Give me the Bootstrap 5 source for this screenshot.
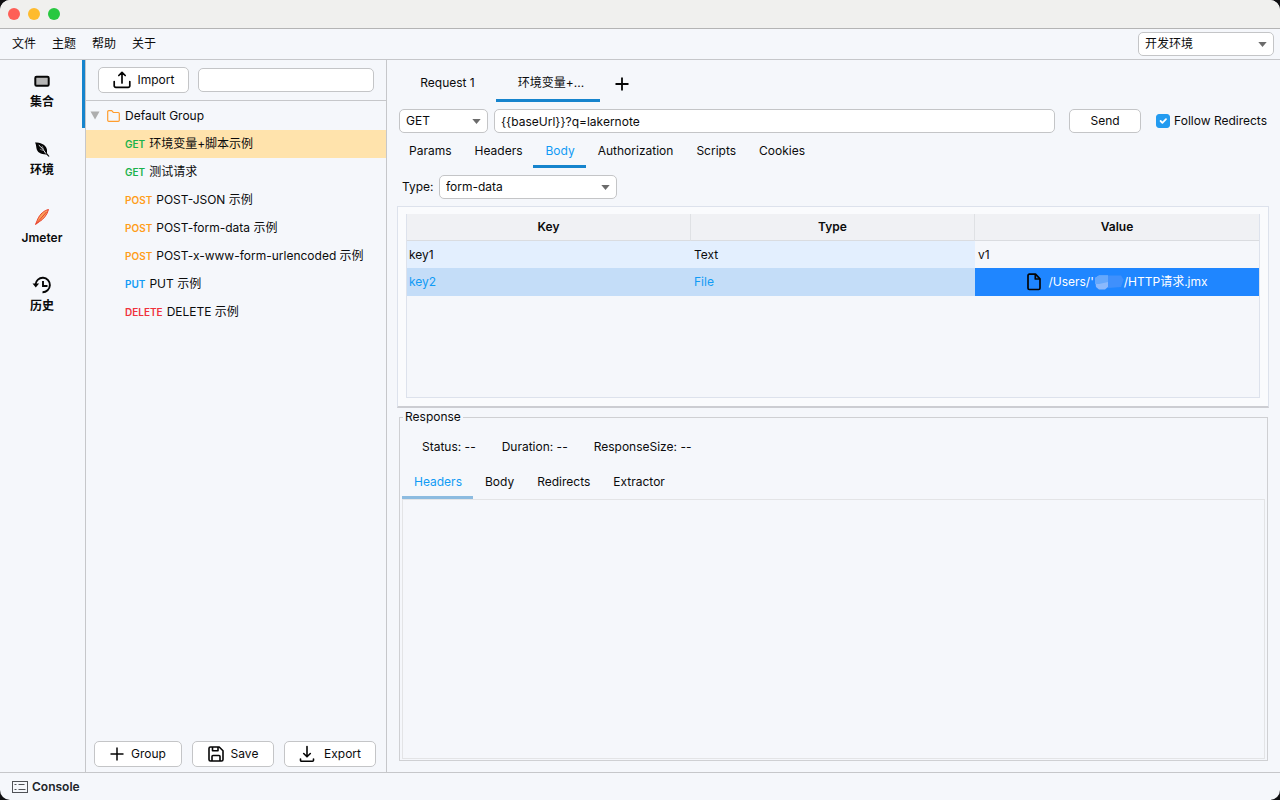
<!DOCTYPE html>
<html lang="zh-CN">
<head>
<meta charset="utf-8">
<meta name="viewport" content="width=device-width, initial-scale=1">
<title>HTTP Client</title>
<link href="https://cdn.jsdelivr.net/npm/bootstrap@5.3.0/dist/css/bootstrap.min.css" rel="stylesheet">
<style>
:root{--bg:#f5f7fb;--line:#c6c7ca;--accent:#1684cd;--link:#119bf5}
html{background:#101012}
body{font-family:Inter,"Noto Sans CJK SC",sans-serif;font-size:12px;line-height:16px;color:#0b0b0c;background:#101012}
.app-window{background:var(--bg);border-radius:10px;overflow:hidden}
.title-strip{height:29px;background:#f0f0ee;border-bottom:1px solid #b4b4b4;padding-left:8px}
.dot{width:12px;height:12px;border-radius:50%}
.menu-strip{height:31px;border-bottom:1px solid var(--line);padding:0 6px 0 12px}
.menu-strip a,.side-tabs button{color:inherit;text-decoration:none}
.form-select,.form-control,.tool-btn{font-size:12px;line-height:16px;min-height:24px;height:24px;border:1px solid #c4c5c7;border-radius:5px;background-color:#fff;color:#0b0b0c}
.form-select{padding:0 24px 0 6px;background-image:url("data:image/svg+xml,%3Csvg xmlns='http://www.w3.org/2000/svg' viewBox='0 0 10 6'%3E%3Cpath d='M0 0h10L5 6z' fill='%236b6b6b'/%3E%3C/svg%3E");background-size:9px 5px;background-position:right 6px center}
.form-control{padding:0 6px}
.tool-btn{display:inline-flex;align-items:center;justify-content:center;gap:7px;padding:0}
.tool-btn.tall{height:26px}
.side-tabs{width:86px;border-right:1px solid var(--line)}
.side-tabs button{height:68px;padding:0 0 7px 2px;border:0;border-right:3px solid transparent;background:none;font-weight:600;display:flex;flex-direction:column;align-items:center;justify-content:center;gap:4px}
.side-tabs button.active{border-right-color:var(--accent)}
.tree-pane{width:301px;border-right:1px solid var(--line)}
.tree-tools{height:41px;border-bottom:1px solid var(--line);padding:0 12px;gap:9px}
.tree-list .node{height:28px;padding-left:39px;display:flex;align-items:center;gap:4px;color:inherit;text-decoration:none;white-space:nowrap}
.tree-list .node.root{padding-left:4px;height:29px}
.tree-list .node.active{background:#ffe3ac}
.verb{font-size:10px;line-height:12px;font-weight:600}
.get{color:#1bb24b}.post{color:#ff9d19}.put{color:#119bf5}.del{color:#f0323c}
.main-pane{padding:0 12px}
.req-tabs{height:42px}
.req-tabs button,.sub-tabs button{border:0;border-bottom:3px solid transparent;background:none;color:inherit;padding:3px 0 0}
.req-tabs button{padding-top:7px}
.req-tabs .req{width:97px}
.req-tabs .req.active{width:104px;padding-left:6px;border-bottom-color:var(--accent)}
.sub-tabs button{height:32px;padding:0 11px 0 12px}
.sub-tabs .active{color:var(--link);border-bottom-color:var(--accent)}
.sub-tabs .muted-line.active{border-bottom-color:#8cbbe0}
.full-left{margin-left:-2px}
.form-check-input{width:14px;height:14px;margin:0;border-radius:2px}
.form-check-input:checked{background-color:#239bf0;border-color:#239bf0}
.grid-box{margin:7px -1px 0 -2px;border:1px solid #dde2ec;border-bottom:2px solid #cccdd2;background:#fafbfd;padding:7px 8px 8px;height:202px}
.grid-view{border:1px solid #dde2ec;border-top:0;background:var(--bg)}
.grid-table{table-layout:fixed;width:100%;margin:0;border-collapse:separate;border-spacing:0}
.grid-table th{background:#f0f1f4;height:27px;text-align:center;font-weight:600;border-bottom:1px solid #dadce0;border-right:1px solid #dfe1e4;padding:0}
.grid-table th:last-child{border-right:0}
.grid-table td{height:28px;padding:0 2px;vertical-align:middle}
.grid-table .r1 td{height:27px}
.grid-table td+td{padding-left:3px}
.grid-table .r1 td{background:#e3effe}
.grid-table .r1 td:last-child{background:var(--bg)}
.grid-table .r2 td{background:#c4ddf8;color:var(--link)}
.grid-table .r2 td:last-child{background:#1f86ff;color:#fff}
.resp{border:1px solid #cfd0d3;padding:0 2px 1px;margin:1px 0 11px;min-height:0}
.resp legend{float:none;width:auto;font-size:12px;line-height:16px;margin:0 0 0 1px;padding:0 2px}
.stats{padding:14px 20px 0;gap:26px}
.result{border:1px solid #e3e4e6}
.console-strip{height:28px;border-top:1px solid var(--line);padding-left:12px}
.console-strip button{font-weight:600;gap:4px;font-size:12px;line-height:16px}
</style>
</head>
<body>
<div class="app-window vh-100 d-flex flex-column">
  <header>
    <div class="title-strip d-flex align-items-center gap-2">
      <span class="dot" style="background:#fe5f57"></span><span class="dot" style="background:#febb2e"></span><span class="dot" style="background:#28c840"></span>
    </div>
    <div class="menu-strip d-flex align-items-center">
      <nav class="d-flex gap-3"><a href="#">文件</a><a href="#">主题</a><a href="#">帮助</a><a href="#">关于</a></nav>
      <select class="form-select ms-auto" style="width:136px" aria-label="Environment"><option>开发环境</option></select>
    </div>
  </header>

  <div class="d-flex flex-grow-1" style="min-height:0">
    <nav class="side-tabs d-flex flex-column flex-shrink-0">
      <button class="active" type="button">
        <svg width="18" height="18" viewBox="0 0 18 18"><rect x="2.300" y="4.800" width="13.400" height="9" rx="1.200" fill="#b5b5b5" stroke="#050505" stroke-width="2"/></svg>集合</button>
      <button type="button">
        <svg width="18" height="18" viewBox="0 0 18 18"><path d="M2 2.500C7 2.500 12.500 4 13.800 9c.5 1.900 0 3.400.4 4.600l2.300 2.700-.9.500-2.200-2.400C8 14.500 4 12.500 3.400 8 3.100 5.800 3 4.300 2 2.500z" fill="#050505"/><path d="M5.800 5.200c2.600 1.900 5 5 7 8.300" stroke="#f5f7fb" stroke-width="1" fill="none"/><path d="M6.800 9l3 1.600M9 5.800l1.600 3.600" stroke="#f5f7fb" stroke-width=".5" fill="none"/></svg>环境</button>
      <button type="button">
        <svg width="18" height="18" viewBox="0 0 18 18"><path d="M15.500 1.500C11 2.500 7 6 4.800 11L2.500 16.500l3.700-2.700c4-2.300 8-6.800 9.300-12.300z" fill="#f9a05a" stroke="#e8422f" stroke-width="1"/><path d="M3 16L13.500 4" stroke="#e8422f" stroke-width="1"/></svg>Jmeter</button>
      <button type="button">
        <svg width="20" height="18" viewBox="0 0 20 18" fill="none" stroke="#050505" stroke-width="1.900"><path d="M3.500 8.500A7.200 7.200 0 1 1 10.500 16.200"/><path d="M11 5v5h4.500"/><path d="M.5 7.500h6.600L3.800 11.500z" fill="#050505" stroke="none"/></svg>历史</button>
    </nav>

    <aside class="tree-pane d-flex flex-column flex-shrink-0">
      <div class="tree-tools d-flex align-items-center">
        <button class="tool-btn tall flex-shrink-0" style="width:91px" type="button">
          <svg width="18" height="18" viewBox="0 0 18 18" fill="none" stroke="#050505" stroke-width="1.700" stroke-linecap="round" stroke-linejoin="round"><path d="M9 12V1.500M5.800 4.500L9 1.300l3.200 3.200M1.200 10.500v4.300a1.600 1.600 0 0 0 1.600 1.600h12.400a1.600 1.600 0 0 0 1.600-1.600v-4.300"/></svg>Import</button>
        <input class="form-control" type="text" aria-label="Search">
      </div>
      <div class="tree-list flex-grow-1">
        <a class="node root" href="#">
          <svg width="10" height="9" viewBox="0 0 10 9"><path d="M.5.500h9L5 8.500z" fill="#aeaeae"/></svg>
          <svg style="margin:0 1px 0 3px" width="13" height="12" viewBox="0 0 13 12"><path d="M.7 1.700a1 1 0 0 1 1-1h3l1.600 1.800h5a1 1 0 0 1 1 1v6.800a1 1 0 0 1-1 1H1.700a1 1 0 0 1-1-1z" fill="none" stroke="#ff9d2e" stroke-width="1.200"/></svg>Default Group</a>
        <a class="node active" href="#"><span class="verb get">GET</span>环境变量+脚本示例</a>
        <a class="node" href="#"><span class="verb get">GET</span>测试请求</a>
        <a class="node" href="#"><span class="verb post">POST</span>POST-JSON 示例</a>
        <a class="node" href="#"><span class="verb post">POST</span>POST-form-data 示例</a>
        <a class="node" href="#"><span class="verb post">POST</span>POST-x-www-form-urlencoded 示例</a>
        <a class="node" href="#"><span class="verb put">PUT</span>PUT 示例</a>
        <a class="node" href="#"><span class="verb del">DELETE</span>DELETE 示例</a>
      </div>
      <div class="d-flex px-2" style="gap:10px;padding-bottom:5px">
        <button class="tool-btn tall" style="width:88px" type="button">
          <svg width="14" height="14" viewBox="0 0 14 14"><path d="M7 .5v13M.5 7h13" stroke="#050505" stroke-width="1.500"/></svg>Group</button>
        <button class="tool-btn tall" style="width:82px" type="button">
          <svg width="16" height="16" viewBox="0 0 16 16" fill="none" stroke="#050505" stroke-width="1.600" stroke-linejoin="round"><path d="M1 2.500A1.500 1.500 0 0 1 2.500 1h8.700L15 4.800v8.700a1.500 1.500 0 0 1-1.500 1.500h-11A1.500 1.500 0 0 1 1 13.500z"/><path d="M4.500 1v3.700h5.500V1M4 15v-4.500a1 1 0 0 1 1-1h6a1 1 0 0 1 1 1V15"/></svg>Save</button>
        <button class="tool-btn tall" style="width:92px;gap:9px" type="button">
          <svg width="16" height="18" viewBox="0 0 16 18" fill="none" stroke="#050505" stroke-width="1.600" stroke-linecap="round" stroke-linejoin="round"><path d="M8 1.500v10M4.700 8.500L8 11.800l3.300-3.300M1.500 14v1.200a1 1 0 0 0 1 1h11a1 1 0 0 0 1-1V14"/></svg>Export</button>
      </div>
    </aside>

    <main class="main-pane flex-grow-1 d-flex flex-column" style="min-width:0">
      <div class="req-tabs d-flex">
        <button class="req" type="button">Request 1</button>
        <button class="req active" type="button">环境变量+...</button>
        <button style="padding-left:15px" type="button" aria-label="New request"><svg width="14" height="14" viewBox="0 0 14 14"><path d="M7 .5v13M.5 7h13" stroke="#050505" stroke-width="1.800"/></svg></button>
      </div>
      <div class="d-flex align-items-center" style="padding:7px 1px 0 0">
        <select class="form-select flex-shrink-0" style="width:89px" aria-label="Method"><option>GET</option></select>
        <input class="form-control" style="margin:0 14px 0 6px" type="text" aria-label="URL" value="{{baseUrl}}?q=lakernote">
        <button class="tool-btn flex-shrink-0" style="width:72px" type="button">Send</button>
        <input class="form-check-input flex-shrink-0" style="margin-left:15px" type="checkbox" id="follow" checked>
        <label class="text-nowrap ps-1" for="follow">Follow Redirects</label>
      </div>
      <div class="sub-tabs full-left d-flex" style="padding-top:3px">
        <button type="button">Params</button><button type="button">Headers</button><button class="active" type="button">Body</button><button type="button">Authorization</button><button type="button">Scripts</button><button type="button">Cookies</button>
      </div>
      <div class="d-flex align-items-center" style="padding:7px 0 0 3px">
        <label for="bodyType" style="width:37px">Type:</label>
        <select class="form-select" style="width:178px" id="bodyType"><option>form-data</option></select>
      </div>

      <div class="grid-box d-flex flex-column flex-shrink-0">
        <div class="grid-view flex-grow-1">
          <table class="grid-table">
            <thead><tr><th>Key</th><th>Type</th><th>Value</th></tr></thead>
            <tbody>
              <tr class="r1"><td>key1</td><td>Text</td><td>v1</td></tr>
              <tr class="r2"><td>key2</td><td>File</td><td>
                <div class="d-flex align-items-center justify-content-center">
                  <svg style="margin-right:7px" width="14" height="18" viewBox="0 0 14 18" fill="none" stroke="#050505" stroke-width="1.700" stroke-linejoin="round"><path d="M1 2.500A1.300 1.300 0 0 1 2.300 1.200H8.500l4.500 4.600v9.400a1.300 1.300 0 0 1-1.300 1.300H2.300A1.300 1.300 0 0 1 1 15.200z"/><path d="M8.300 1.200v4.800H13"/></svg>
                  <span>/Users/'</span><svg width="30" height="18" viewBox="0 0 30 18"><path d="M1 5l4-2.500h9V14l-3 2.500H5L2 14z" fill="#8bb9fc"/><path d="M1 5l4-2.500h9V9L5 11H1z" fill="#65a8fc"/><path d="M14 2.500h13l2.500 4L27 14l-13 1z" fill="#3f90fc"/></svg><span>/HTTP请求.jmx</span></div></td></tr>
            </tbody>
          </table>
        </div>
      </div>

      <fieldset class="resp flex-grow-1 d-flex flex-column">
        <legend>Response</legend>
        <div class="stats d-flex"><span>Status: --</span><span>Duration: --</span><span>ResponseSize: --</span></div>
        <div class="sub-tabs d-flex" style="padding-top:12px">
          <button class="active muted-line" type="button">Headers</button><button type="button">Body</button><button type="button">Redirects</button><button type="button">Extractor</button>
        </div>
        <div class="result flex-grow-1"></div>
      </fieldset>
    </main>
  </div>

  <footer class="console-strip d-flex align-items-center">
    <button class="btn p-0 border-0 d-flex align-items-center" type="button">
      <svg width="16" height="12" viewBox="0 0 16 12" fill="none" stroke="#505256" stroke-width="1"><rect x=".5" y=".5" width="15" height="11"/><path d="M2.500 3.500h2M2.500 8.500h2M6.500 3.500h6M6.500 8.500h7"/></svg>Console</button>
  </footer>
</div>
<script src="https://cdn.jsdelivr.net/npm/bootstrap@5.3.0/dist/js/bootstrap.bundle.min.js"></script>
</body>
</html>
